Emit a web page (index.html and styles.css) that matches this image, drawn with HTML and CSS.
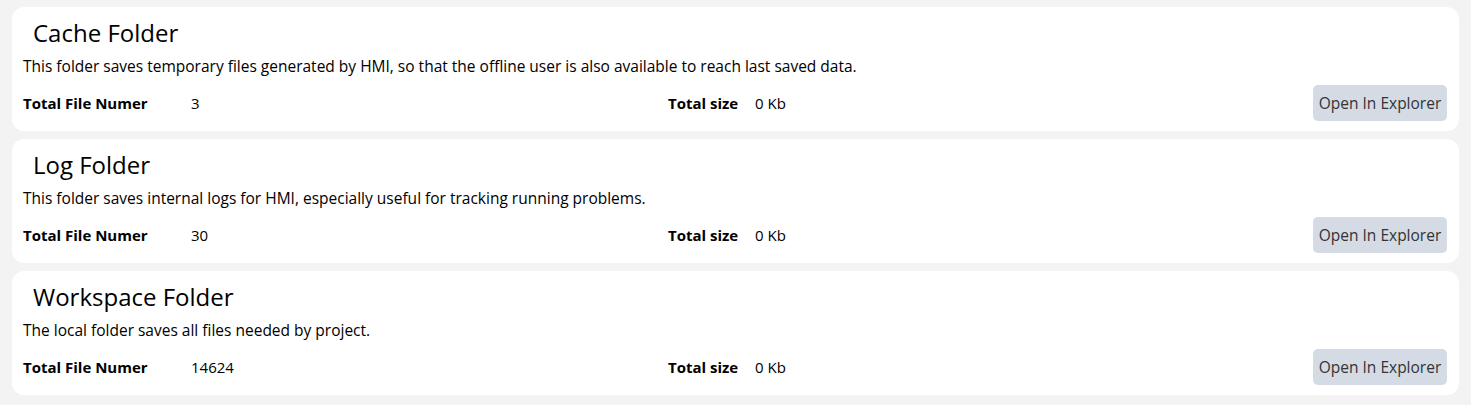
FILE: index.html
```html
<!DOCTYPE html>
<html lang="en">
<head>
<meta charset="utf-8">
<title>Folders</title>
<link rel="stylesheet" href="styles.css">
</head>
<body>
<main class="folders">
  <section class="card">
    <h2 class="card-title">Cache Folder</h2>
    <p class="card-desc">This folder saves temporary files generated by HMI, so that the offline user is also available to reach last saved data.</p>
    <div class="card-stats">
      <div class="stat"><span class="stat-label label-count">Total File Numer</span><span class="stat-value">3</span></div>
      <div class="stat"><span class="stat-label label-size">Total size</span><span class="stat-value">0 Kb</span></div>
      <button class="btn-open" type="button">Open In Explorer</button>
    </div>
  </section>
  <section class="card">
    <h2 class="card-title">Log Folder</h2>
    <p class="card-desc">This folder saves internal logs for HMI, especially useful for tracking running problems.</p>
    <div class="card-stats">
      <div class="stat"><span class="stat-label label-count">Total File Numer</span><span class="stat-value">30</span></div>
      <div class="stat"><span class="stat-label label-size">Total size</span><span class="stat-value">0 Kb</span></div>
      <button class="btn-open" type="button">Open In Explorer</button>
    </div>
  </section>
  <section class="card">
    <h2 class="card-title">Workspace Folder</h2>
    <p class="card-desc">The local folder saves all files needed by project.</p>
    <div class="card-stats">
      <div class="stat"><span class="stat-label label-count">Total File Numer</span><span class="stat-value">14624</span></div>
      <div class="stat"><span class="stat-label label-size">Total size</span><span class="stat-value">0 Kb</span></div>
      <button class="btn-open" type="button">Open In Explorer</button>
    </div>
  </section>
</main>
</body>
</html>
```
FILE: styles.css
```css
html, body {
  margin: 0;
  padding: 0;
  background: #f3f3f3;
}

body {
  font-family: "Open Sans", "Noto Sans", sans-serif;
  color: #000;
}

.folders {
  display: flex;
  flex-direction: column;
  gap: 8px;
  padding: 7px 12px 0 12px;
}

.card {
  background: #fff;
  border-radius: 12px;
  height: 124px;
  box-sizing: border-box;
  padding: 10px 12px 0 11px;
  display: flex;
  flex-direction: column;
}

.card-title {
  margin: 0 0 0 10px;
  font-size: 24px;
  font-weight: 400;
  line-height: 32px;
}

.card-desc {
  margin: 6px 0 0 0;
  font-size: 15.5px;
  line-height: 22px;
}

.card-stats {
  display: flex;
  align-items: center;
  margin-top: 8px;
}

.stat {
  flex: 1;
  display: flex;
  align-items: center;
  font-size: 15px;
}

.stat-label {
  font-weight: 700;
}

.label-count {
  width: 168px;
}

.label-size {
  width: 87px;
}

.btn-open {
  width: 134px;
  height: 36px;
  border: none;
  border-radius: 5px;
  background: #d4dbe5;
  color: #333;
  font-family: inherit;
  font-size: 15.5px;
  padding: 0;
}
```
